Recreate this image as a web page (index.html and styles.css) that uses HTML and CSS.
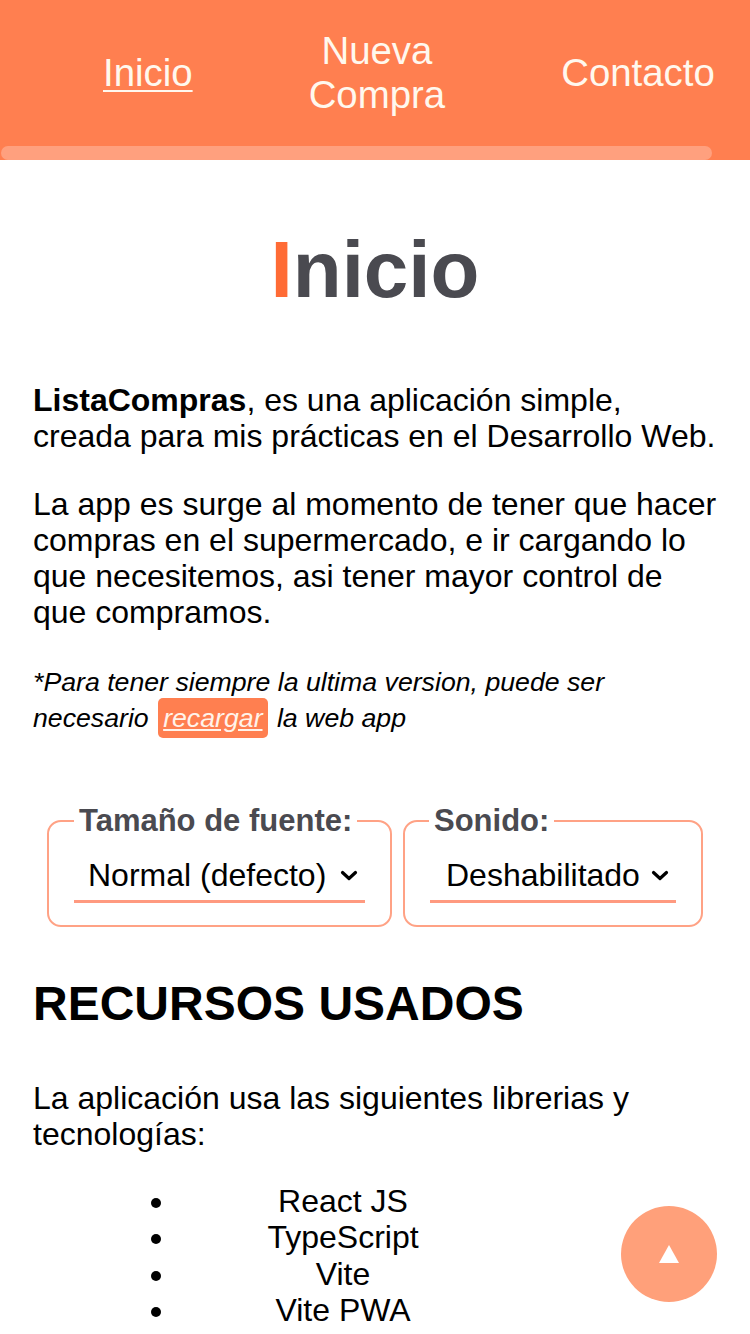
FILE: index.html
```html
<!DOCTYPE html>
<html lang="es">
<head>
<meta charset="utf-8">
<title>ListaCompras</title>
<link rel="stylesheet" href="styles.css">
</head>
<body>
<nav class="nav">
  <ul class="nav-links">
    <li><a class="nav-link active" href="#">Inicio</a></li>
    <li><a class="nav-link" href="#">Nueva<br>Compra</a></li>
    <li><a class="nav-link" href="#">Contacto</a></li>
  </ul>
  <div class="nav-bar"></div>
</nav>
<main class="main">
  <h1 class="title"><span class="title-first">I</span>nicio</h1>
  <p class="text"><strong>ListaCompras</strong>, es una aplicación simple, creada para mis prácticas en el Desarrollo Web.</p>
  <p class="text">La app es surge al momento de tener que hacer compras en el supermercado, e ir cargando lo que necesitemos, asi tener mayor control de que compramos.</p>
  <p class="note">*Para tener siempre la ultima version, puede ser necesario <a class="reload" href="#">recargar</a> la web app</p>

  <div class="settings">
    <fieldset class="setting">
      <legend class="setting-legend">Tamaño de fuente:</legend>
      <span class="select-wrap">
        <select class="select select-font">
          <option>Normal (defecto)</option>
          <option>Grande</option>
        </select>
        <svg class="chevron" width="18" height="11" viewBox="0 0 18 11"><polyline points="2.5,2.5 9,8.5 15.5,2.5" fill="none" stroke="#000" stroke-width="3.2" stroke-linecap="round" stroke-linejoin="round"/></svg>
      </span>
    </fieldset>
    <fieldset class="setting">
      <legend class="setting-legend legend-sound">Sonido:</legend>
      <span class="select-wrap">
        <select class="select select-sound">
          <option>Deshabilitado</option>
          <option>Habilitado</option>
        </select>
        <svg class="chevron" width="18" height="11" viewBox="0 0 18 11"><polyline points="2.5,2.5 9,8.5 15.5,2.5" fill="none" stroke="#000" stroke-width="3.2" stroke-linecap="round" stroke-linejoin="round"/></svg>
      </span>
    </fieldset>
  </div>

  <h2 class="subtitle">RECURSOS USADOS</h2>
  <p class="text text-lead">La aplicación usa las siguientes librerias y tecnologías:</p>
  <ul class="tech">
    <li>React JS</li>
    <li>TypeScript</li>
    <li>Vite</li>
    <li>Vite PWA</li>
    <li>React Router DOM</li>
    <li>Howler</li>
  </ul>
</main>
<button class="to-top" aria-label="Subir">
  <svg width="22" height="20" viewBox="0 0 22 20"><polygon points="11,1 21,19 1,19" fill="#fff"/></svg>
</button>
</body>
</html>
```
FILE: styles.css
```css
* { box-sizing: border-box; }
html, body { margin: 0; padding: 0; }
body {
  font-family: "Liberation Sans", Arial, sans-serif;
  font-size: 32px;
  color: #000;
  background: #fff;
  overflow: hidden;
}
.nav {
  background: #ff7f50;
  height: 160px;
  display: flex;
  flex-direction: column;
}
.nav-links {
  list-style: none;
  margin: 0;
  padding: 0 0 0 103px;
  height: 146px;
  display: flex;
  align-items: center;
  gap: 116px;
}
.nav-links li { text-align: center; }
.nav-link {
  color: #fff8ee;
  text-decoration: none;
  font-size: 38.4px;
  line-height: 44px;
}
.nav-link.active { text-decoration: underline; text-decoration-thickness: 2px; text-underline-offset: 4px; }
.nav-bar {
  width: 711px;
  height: 14px;
  margin-left: 1px;
  border-radius: 7px;
  background: #ffa07e;
}
.main { padding: 0 33px; }
.title {
  margin: 64px 0 66px;
  text-align: center;
  font-size: 80px;
  font-weight: bold;
  color: #4a4a50;
}
.title-first { color: #ff6b35; }
.text {
  margin: 32px 0;
  line-height: 36px;
}
.text-lead { margin-bottom: 31px; }
.note {
  margin: 34px 0 0;
  font-size: 26.7px;
  font-style: italic;
  line-height: 36px;
}
.reload {
  background: #ff7f50;
  color: #fff3ea;
  padding: 5px 5px;
  margin: 0 2px;
  border-radius: 5px;
}
.settings {
  margin-top: 67px;
  display: flex;
  justify-content: center;
  gap: 11px;
}
.setting {
  margin: 0;
  padding: 0 25px 22px;
  border: 2px solid #ffa285;
  border-radius: 14px;
}
.setting-legend {
  padding: 0 5px;
  margin-left: 0;
  font-size: 31px;
  font-weight: bold;
  color: #4a4a50;
  line-height: 36px;
}
.legend-sound { margin-left: -1px; }
.select-wrap {
  position: relative;
  display: inline-block;
}
.select {
  appearance: none;
  -webkit-appearance: none;
  font-family: "Liberation Sans", Arial, sans-serif;
  font-size: 32px;
  color: #000;
  background: transparent;
  border: 0;
  border-bottom: 3px solid #ff9a80;
  border-radius: 0;
  height: 64px;
  padding: 17px 0 7px 14px;
  outline: none;
}
.select-font { width: 291px; }
.select-sound { width: 246px; padding-left: 16px; }
.chevron {
  position: absolute;
  right: 7px;
  top: 31px;
  pointer-events: none;
}
.subtitle {
  margin: 49px 0;
  font-size: 48px;
  font-weight: bold;
}
.tech {
  margin: 31px 208px 0 0;
  padding-left: 144px;
  line-height: 36.4px;
}
.tech li { text-align: center; }
.to-top {
  position: fixed;
  right: 33px;
  bottom: 32px;
  width: 96px;
  height: 96px;
  border-radius: 50%;
  border: 0;
  background: #ffa07a;
  display: flex;
  align-items: center;
  justify-content: center;
  padding: 0;
}
```
